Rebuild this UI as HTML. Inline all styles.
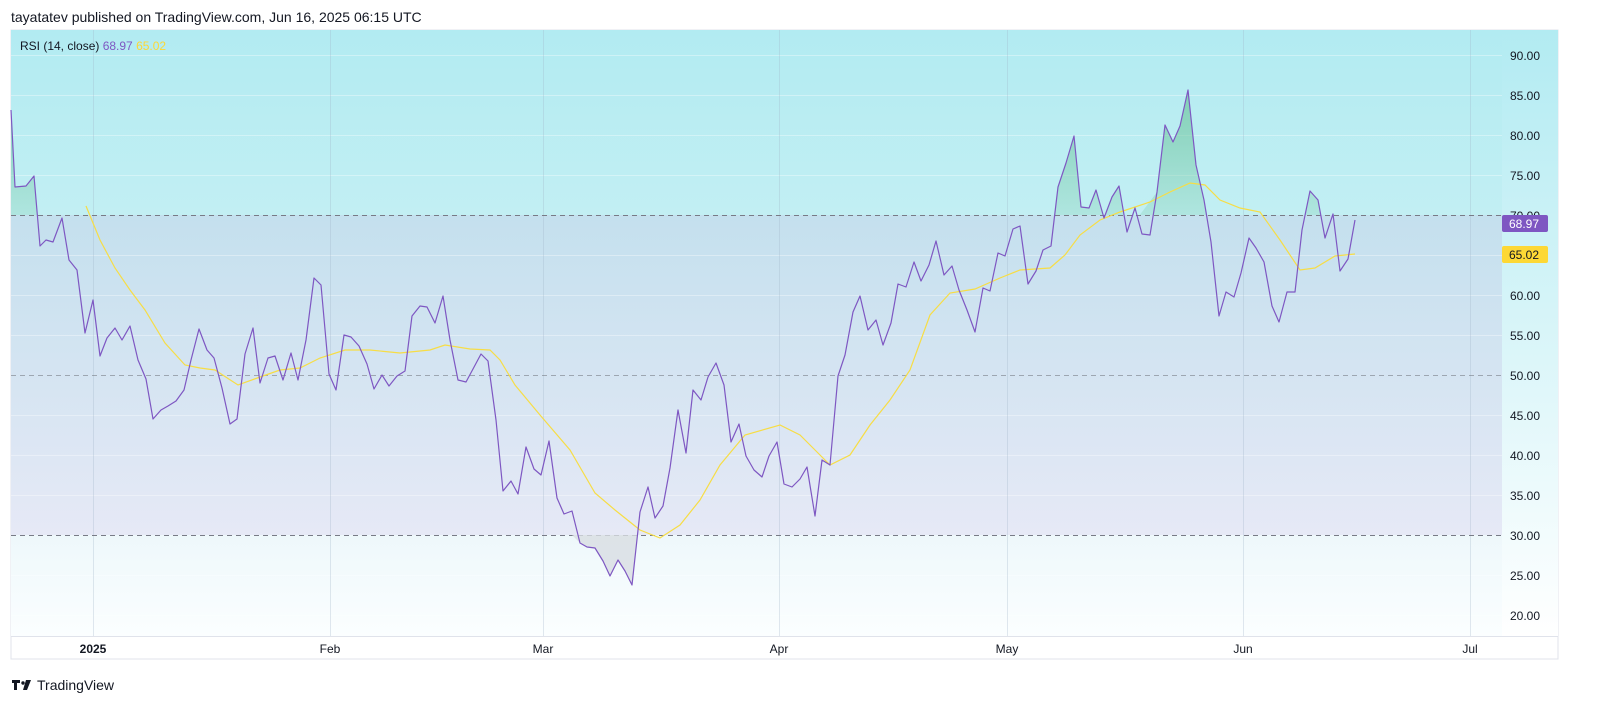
<!DOCTYPE html>
<html><head><meta charset="utf-8"><style>
body{margin:0;width:1600px;height:718px;background:#fff;font-family:"Liberation Sans",sans-serif;overflow:hidden;position:relative}
.t{position:absolute;white-space:nowrap}
</style></head><body>
<div class="t" style="left:11px;top:9px;font-size:14px;color:#131722">tayatatev published on TradingView.com, Jun 16, 2025 06:15 UTC</div>
<svg width="1600" height="718" style="position:absolute;left:0;top:0">
<defs>
<linearGradient id="up" x1="0" y1="0" x2="0" y2="1"><stop offset="0" stop-color="#b2ebf2"/><stop offset="1" stop-color="#c2eff3"/></linearGradient>
<linearGradient id="mid" x1="0" y1="0" x2="0" y2="1"><stop offset="0" stop-color="#c4e0ee"/><stop offset="1" stop-color="#e6e9f6"/></linearGradient>
<linearGradient id="lo" x1="0" y1="0" x2="0" y2="1"><stop offset="0" stop-color="#eef8fb"/><stop offset="1" stop-color="#fbfeff"/></linearGradient>
<linearGradient id="axis" x1="0" y1="0" x2="0" y2="1"><stop offset="0" stop-color="#b2ebf2"/><stop offset="1" stop-color="#ffffff"/></linearGradient>
<linearGradient id="gf" x1="0" y1="0" x2="0" y2="1"><stop offset="0" stop-color="#6cc39a" stop-opacity=".7"/><stop offset="1" stop-color="#6cc39a" stop-opacity=".1"/></linearGradient>
<clipPath id="ca"><rect x="11" y="30" width="1491" height="185"/></clipPath>
<clipPath id="cb"><rect x="11" y="535" width="1491" height="101"/></clipPath>
</defs>
<rect x="11" y="30" width="1547" height="629" fill="#fff" stroke="#e0e3eb"/>
<rect x="11" y="30" width="1491" height="185" fill="url(#up)"/>
<rect x="11" y="215" width="1491" height="320" fill="url(#mid)"/>
<rect x="11" y="535" width="1491" height="101" fill="url(#lo)"/>
<rect x="1502" y="30" width="56" height="606" fill="url(#axis)"/>
<g stroke="#ffffff" stroke-opacity=".35" stroke-width="1">
<line x1="11" x2="1502" y1="55.5" y2="55.5"/><line x1="11" x2="1502" y1="95.5" y2="95.5"/><line x1="11" x2="1502" y1="135.5" y2="135.5"/><line x1="11" x2="1502" y1="175.5" y2="175.5"/><line x1="11" x2="1502" y1="255.5" y2="255.5"/><line x1="11" x2="1502" y1="295.5" y2="295.5"/><line x1="11" x2="1502" y1="335.5" y2="335.5"/><line x1="11" x2="1502" y1="415.5" y2="415.5"/><line x1="11" x2="1502" y1="455.5" y2="455.5"/><line x1="11" x2="1502" y1="495.5" y2="495.5"/><line x1="11" x2="1502" y1="575.5" y2="575.5"/><line x1="11" x2="1502" y1="615.5" y2="615.5"/>
</g>
<g stroke="#9fb4c8" stroke-opacity=".3"><line x1="93.5" x2="93.5" y1="30" y2="636"/><line x1="330.5" x2="330.5" y1="30" y2="636"/><line x1="543.5" x2="543.5" y1="30" y2="636"/><line x1="779.5" x2="779.5" y1="30" y2="636"/><line x1="1007.5" x2="1007.5" y1="30" y2="636"/><line x1="1243.5" x2="1243.5" y1="30" y2="636"/><line x1="1470.5" x2="1470.5" y1="30" y2="636"/></g>
<g stroke="#787b86" stroke-dasharray="5,4" stroke-width="1"><line x1="11" x2="1502" y1="215.5" y2="215.5"/><line x1="11" x2="1502" y1="375.5" y2="375.5" stroke-opacity=".6"/><line x1="11" x2="1502" y1="535.5" y2="535.5"/></g>
<line x1="11" x2="1558" y1="636.5" y2="636.5" stroke="#e0e3eb"/>
<g id="pts">
<polygon clip-path="url(#ca)" fill="url(#gf)" points="11,215 11,110 15,187 26,186 34,176 40,246 1051,246 1058,187 1066,163 1074,136 1081,207 1089,208 1096,190 1104,218 1112,197 1119,186 1127,232 1157,192 1165,125 1173,142 1180,126 1188,90 1196,165 1204,200 1211,242 1302,230 1310,191 1318,200 1325,238 1333,214 1355,220 1355,215"/>
<polygon clip-path="url(#cb)" fill="#d8dde2" fill-opacity=".8" points="572,535 580,543 587,547 595,548 603,561 610,576 618,560 625,571 632,585 640,512 640,535"/>
</g>
<polyline fill="none" stroke="#f7dd45" stroke-width="1.2" points="86,206 100,240 115,268 130,290 145,310 165,343 185,365 200,368 215,370 238,385 260,377 280,370 300,368 320,358 345,350 370,350 400,353 430,350 445,345 470,349 490,350 500,360 515,385 540,415 570,450 595,493 615,510 640,530 660,538 680,525 700,500 720,465 745,435 780,425 800,435 815,450 830,465 850,455 870,425 890,400 910,370 930,315 950,293 975,289 1000,278 1020,270 1050,268 1065,255 1080,235 1100,220 1120,212 1150,202 1170,192 1190,183 1205,185 1220,200 1240,208 1260,212 1280,240 1300,270 1315,268 1335,256 1355,254"/>
<polyline fill="none" stroke="#7e57c2" stroke-width="1.2" stroke-linejoin="round" points="11,110 15,187 26,186 34,176 40,246 46,240 53,242 62,218 69,260 77,270 85,333 93,300 100,356 107,338 115,328 122,340 130,326 138,360 146,379 153,419 161,410 168,406 176,401 184,390 191,360 199,329 207,350 214,358 222,388 230,424 237,419 245,354 253,328 260,383 268,358 275,356 283,380 291,353 298,380 306,340 314,278 321,285 329,374 336,390 344,335 351,337 359,346 367,364 374,389 382,375 389,386 397,376 405,371 412,316 420,306 427,307 435,323 443,296 450,340 458,380 466,382 473,369 481,354 488,361 496,420 503,491 511,481 518,494 526,447 534,469 541,475 549,441 557,498 564,514 572,511 580,543 587,547 595,548 603,561 610,576 618,560 625,571 632,585 640,512 648,487 655,518 663,506 670,468 678,410 686,453 693,390 701,400 708,377 716,363 724,385 731,442 739,424 746,456 754,470 762,477 769,456 777,442 784,484 792,487 800,479 807,467 815,516 822,460 830,465 838,376 845,355 853,312 860,296 868,330 876,320 883,345 891,323 898,284 906,287 914,262 921,281 929,265 936,241 944,275 952,266 959,290 967,310 975,332 983,288 990,291 998,253 1005,256 1013,229 1020,226 1028,284 1036,271 1043,250 1051,246 1058,187 1066,163 1074,136 1081,207 1089,208 1096,190 1104,218 1112,197 1119,186 1127,232 1135,208 1142,234 1150,235 1157,192 1165,125 1173,142 1180,126 1188,90 1196,165 1204,200 1211,242 1219,316 1226,292 1234,297 1241,273 1249,238 1256,248 1264,262 1272,306 1279,322 1287,292 1295,292 1302,230 1310,191 1318,200 1325,238 1333,214 1340,271 1348,259 1355,220"/>
<g font-family="Liberation Sans, sans-serif" font-size="12" fill="#131722">
<text x="1510" y="60">90.00</text><text x="1510" y="100">85.00</text><text x="1510" y="140">80.00</text><text x="1510" y="180">75.00</text><text x="1510" y="220">70.00</text><text x="1510" y="300">60.00</text><text x="1510" y="340">55.00</text><text x="1510" y="380">50.00</text><text x="1510" y="420">45.00</text><text x="1510" y="460">40.00</text><text x="1510" y="500">35.00</text><text x="1510" y="540">30.00</text><text x="1510" y="580">25.00</text><text x="1510" y="620">20.00</text>
</g>
<rect x="1502" y="215" width="46" height="17" rx="2" fill="#7e57c2"/>
<text x="1509" y="228" font-size="12" fill="#fff" font-family="Liberation Sans, sans-serif">68.97</text>
<rect x="1502" y="246" width="46" height="17" rx="2" fill="#fdd835"/>
<text x="1509" y="259" font-size="12" fill="#131722" font-family="Liberation Sans, sans-serif">65.02</text>
<g font-family="Liberation Sans, sans-serif" font-size="12" fill="#131722" text-anchor="middle">
<text x="93" y="653" font-weight="bold">2025</text><text x="330" y="653">Feb</text><text x="543" y="653">Mar</text><text x="779" y="653">Apr</text><text x="1007" y="653">May</text><text x="1243" y="653">Jun</text><text x="1470" y="653">Jul</text>
</g>
<text x="20" y="50" font-size="12" font-family="Liberation Sans, sans-serif" fill="#131722">RSI (14, close) <tspan fill="#7e57c2">68.97</tspan> <tspan fill="#fdd835">65.02</tspan></text>
<g fill="#131722"><path d="M12 680h8v3h-3v7h-3v-7h-2z"/><circle cx="23" cy="683" r="1.7"/><path d="M26 680h5l-4 10h-4z"/></g>
<text x="37" y="690" font-size="14" font-family="Liberation Sans, sans-serif" fill="#131722">TradingView</text>
</svg>
</body></html>
